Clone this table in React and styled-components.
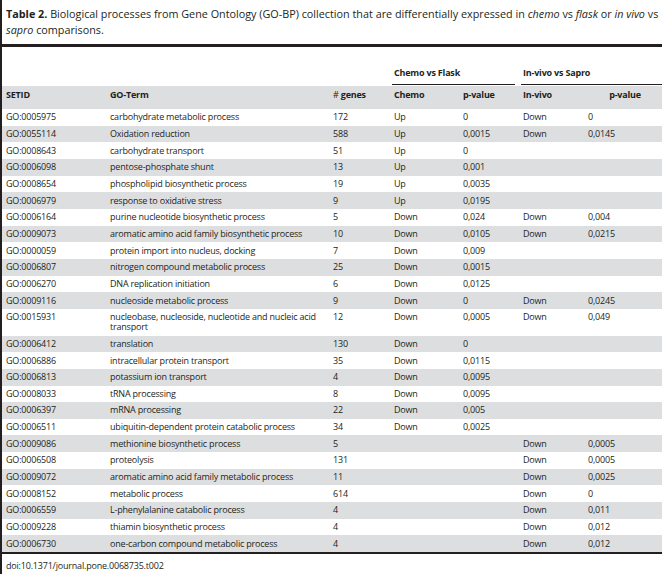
import styled, { createGlobalStyle } from "styled-components";

const GlobalStyle = createGlobalStyle`
  html, body {
    margin: 0;
    padding: 0;
    background: #ffffff;
  }
  body {
    font-family: "Open Sans", "Noto Sans", sans-serif;
    color: #231f20;
  }
`;

const rows = [
  ["GO:0005975", "carbohydrate metabolic process", "172", "Up", "0", "Down", "0"],
  ["GO:0055114", "Oxidation reduction", "588", "Up", "0,0015", "Down", "0,0145"],
  ["GO:0008643", "carbohydrate transport", "51", "Up", "0", "", ""],
  ["GO:0006098", "pentose-phosphate shunt", "13", "Up", "0,001", "", ""],
  ["GO:0008654", "phospholipid biosynthetic process", "19", "Up", "0,0035", "", ""],
  ["GO:0006979", "response to oxidative stress", "9", "Up", "0,0195", "", ""],
  ["GO:0006164", "purine nucleotide biosynthetic process", "5", "Down", "0,024", "Down", "0,004"],
  ["GO:0009073", "aromatic amino acid family biosynthetic process", "10", "Down", "0,0105", "Down", "0,0215"],
  ["GO:0000059", "protein import into nucleus, docking", "7", "Down", "0,009", "", ""],
  ["GO:0006807", "nitrogen compound metabolic process", "25", "Down", "0,0015", "", ""],
  ["GO:0006270", "DNA replication initiation", "6", "Down", "0,0125", "", ""],
  ["GO:0009116", "nucleoside metabolic process", "9", "Down", "0", "Down", "0,0245"],
  ["GO:0015931", "nucleobase, nucleoside, nucleotide and nucleic acid transport", "12", "Down", "0,0005", "Down", "0,049"],
  ["GO:0006412", "translation", "130", "Down", "0", "", ""],
  ["GO:0006886", "intracellular protein transport", "35", "Down", "0,0115", "", ""],
  ["GO:0006813", "potassium ion transport", "4", "Down", "0,0095", "", ""],
  ["GO:0008033", "tRNA processing", "8", "Down", "0,0095", "", ""],
  ["GO:0006397", "mRNA processing", "22", "Down", "0,005", "", ""],
  ["GO:0006511", "ubiquitin-dependent protein catabolic process", "34", "Down", "0,0025", "", ""],
  ["GO:0009086", "methionine biosynthetic process", "5", "", "", "Down", "0,0005"],
  ["GO:0006508", "proteolysis", "131", "", "", "Down", "0,0005"],
  ["GO:0009072", "aromatic amino acid family metabolic process", "11", "", "", "Down", "0,0025"],
  ["GO:0008152", "metabolic process", "614", "", "", "Down", "0"],
  ["GO:0006559", "L-phenylalanine catabolic process", "4", "", "", "Down", "0,011"],
  ["GO:0009228", "thiamin biosynthetic process", "4", "", "", "Down", "0,012"],
  ["GO:0006730", "one-carbon compound metabolic process", "4", "", "", "Down", "0,012"],
];

const widths = [104, 223, 61, 69, 60, 65, 78];

export default function App() {
  return (
    <>
      <GlobalStyle />
      <Page>
        <Caption>
          <CaptionLine>
            <b>Table 2.</b> Biological processes from Gene Ontology (GO-BP) collection that
            are differentially expressed in <i>chemo</i> vs <i>flask</i> or <i>in vivo</i> vs
          </CaptionLine>
          <CaptionLine>
            <i>sapro</i> comparisons.
          </CaptionLine>
        </Caption>
        <ThickRule />
        <Table>
          <colgroup>
            {widths.map((w, i) => (
              <col key={i} style={{ width: w }} />
            ))}
          </colgroup>
          <thead>
            <GroupRow>
              <GroupCell colSpan={3} />
              <GroupCell colSpan={2}>
                <GroupLabel>Chemo vs Flask</GroupLabel>
              </GroupCell>
              <GroupCell colSpan={2} $last>
                <GroupLabel>In-vivo vs Sapro</GroupLabel>
              </GroupCell>
            </GroupRow>
            <HeadRow>
              <HeadCell>SETID</HeadCell>
              <HeadCell>GO-Term</HeadCell>
              <HeadCell>
                <Hash>#</Hash> genes
              </HeadCell>
              <HeadCell>Chemo</HeadCell>
              <HeadCell>p-value</HeadCell>
              <HeadCell>In-vivo</HeadCell>
              <HeadCell $center>p-value</HeadCell>
            </HeadRow>
          </thead>
          <tbody>
            {rows.map((r, i) => (
              <Row key={r[0]} $shaded={i % 2 === 1}>
                {r.map((c, j) => (
                  <Cell key={j}>{c}</Cell>
                ))}
              </Row>
            ))}
          </tbody>
        </Table>
        <Doi>doi:10.1371/journal.pone.0068735.t002</Doi>
      </Page>
    </>
  );
}

const Page = styled.div`
  display: flex;
  flex-direction: column;
  width: 660px;
  height: 574px;
  border-left: 2px solid #231f20;
  box-sizing: content-box;
`;

const Caption = styled.div`
  padding: 6px 0 0 4px;
  font-size: 10.8px;
  line-height: 16px;
  height: 36px;
  b {
    font-weight: 700;
  }
`;

const CaptionLine = styled.div`
  white-space: nowrap;
`;

const ThickRule = styled.div`
  height: 3px;
  background: #231f20;
  margin-top: 2px;
`;

const Table = styled.table`
  width: 660px;
  table-layout: fixed;
  border-collapse: collapse;
  font-size: 9px;
  line-height: 10px;
  letter-spacing: -0.2px;
  border-bottom: 2px solid #231f20;
`;

const GroupRow = styled.tr`
  height: 39px;
`;

const GroupCell = styled.th`
  vertical-align: bottom;
  text-align: left;
  padding: 0 ${(p) => (p.$last ? "0" : "4px")} 1px 2px;
  font-weight: 700;
`;

const GroupLabel = styled.div`
  padding: 0 0 6px 2px;
  border-bottom: 1px solid #231f20;
`;

const HeadRow = styled.tr`
  background: #dddee0;
`;

const HeadCell = styled.th`
  text-align: ${(p) => (p.$center ? "center" : "left")};
  font-weight: 700;
  padding: 4px 0 9px 4px;
  white-space: nowrap;
`;

const Hash = styled.span`
  font-weight: 400;
`;

const Row = styled.tr`
  background: ${(p) => (p.$shaded ? "#dddee0" : "#ffffff")};
`;

const Cell = styled.td`
  padding: 3.33px 0 3.34px 4px;
  vertical-align: top;
  font-weight: 400;
`;

const Doi = styled.div`
  padding: 6px 0 0 4px;
  font-size: 9px;
  line-height: 12px;
  letter-spacing: -0.2px;
`;
